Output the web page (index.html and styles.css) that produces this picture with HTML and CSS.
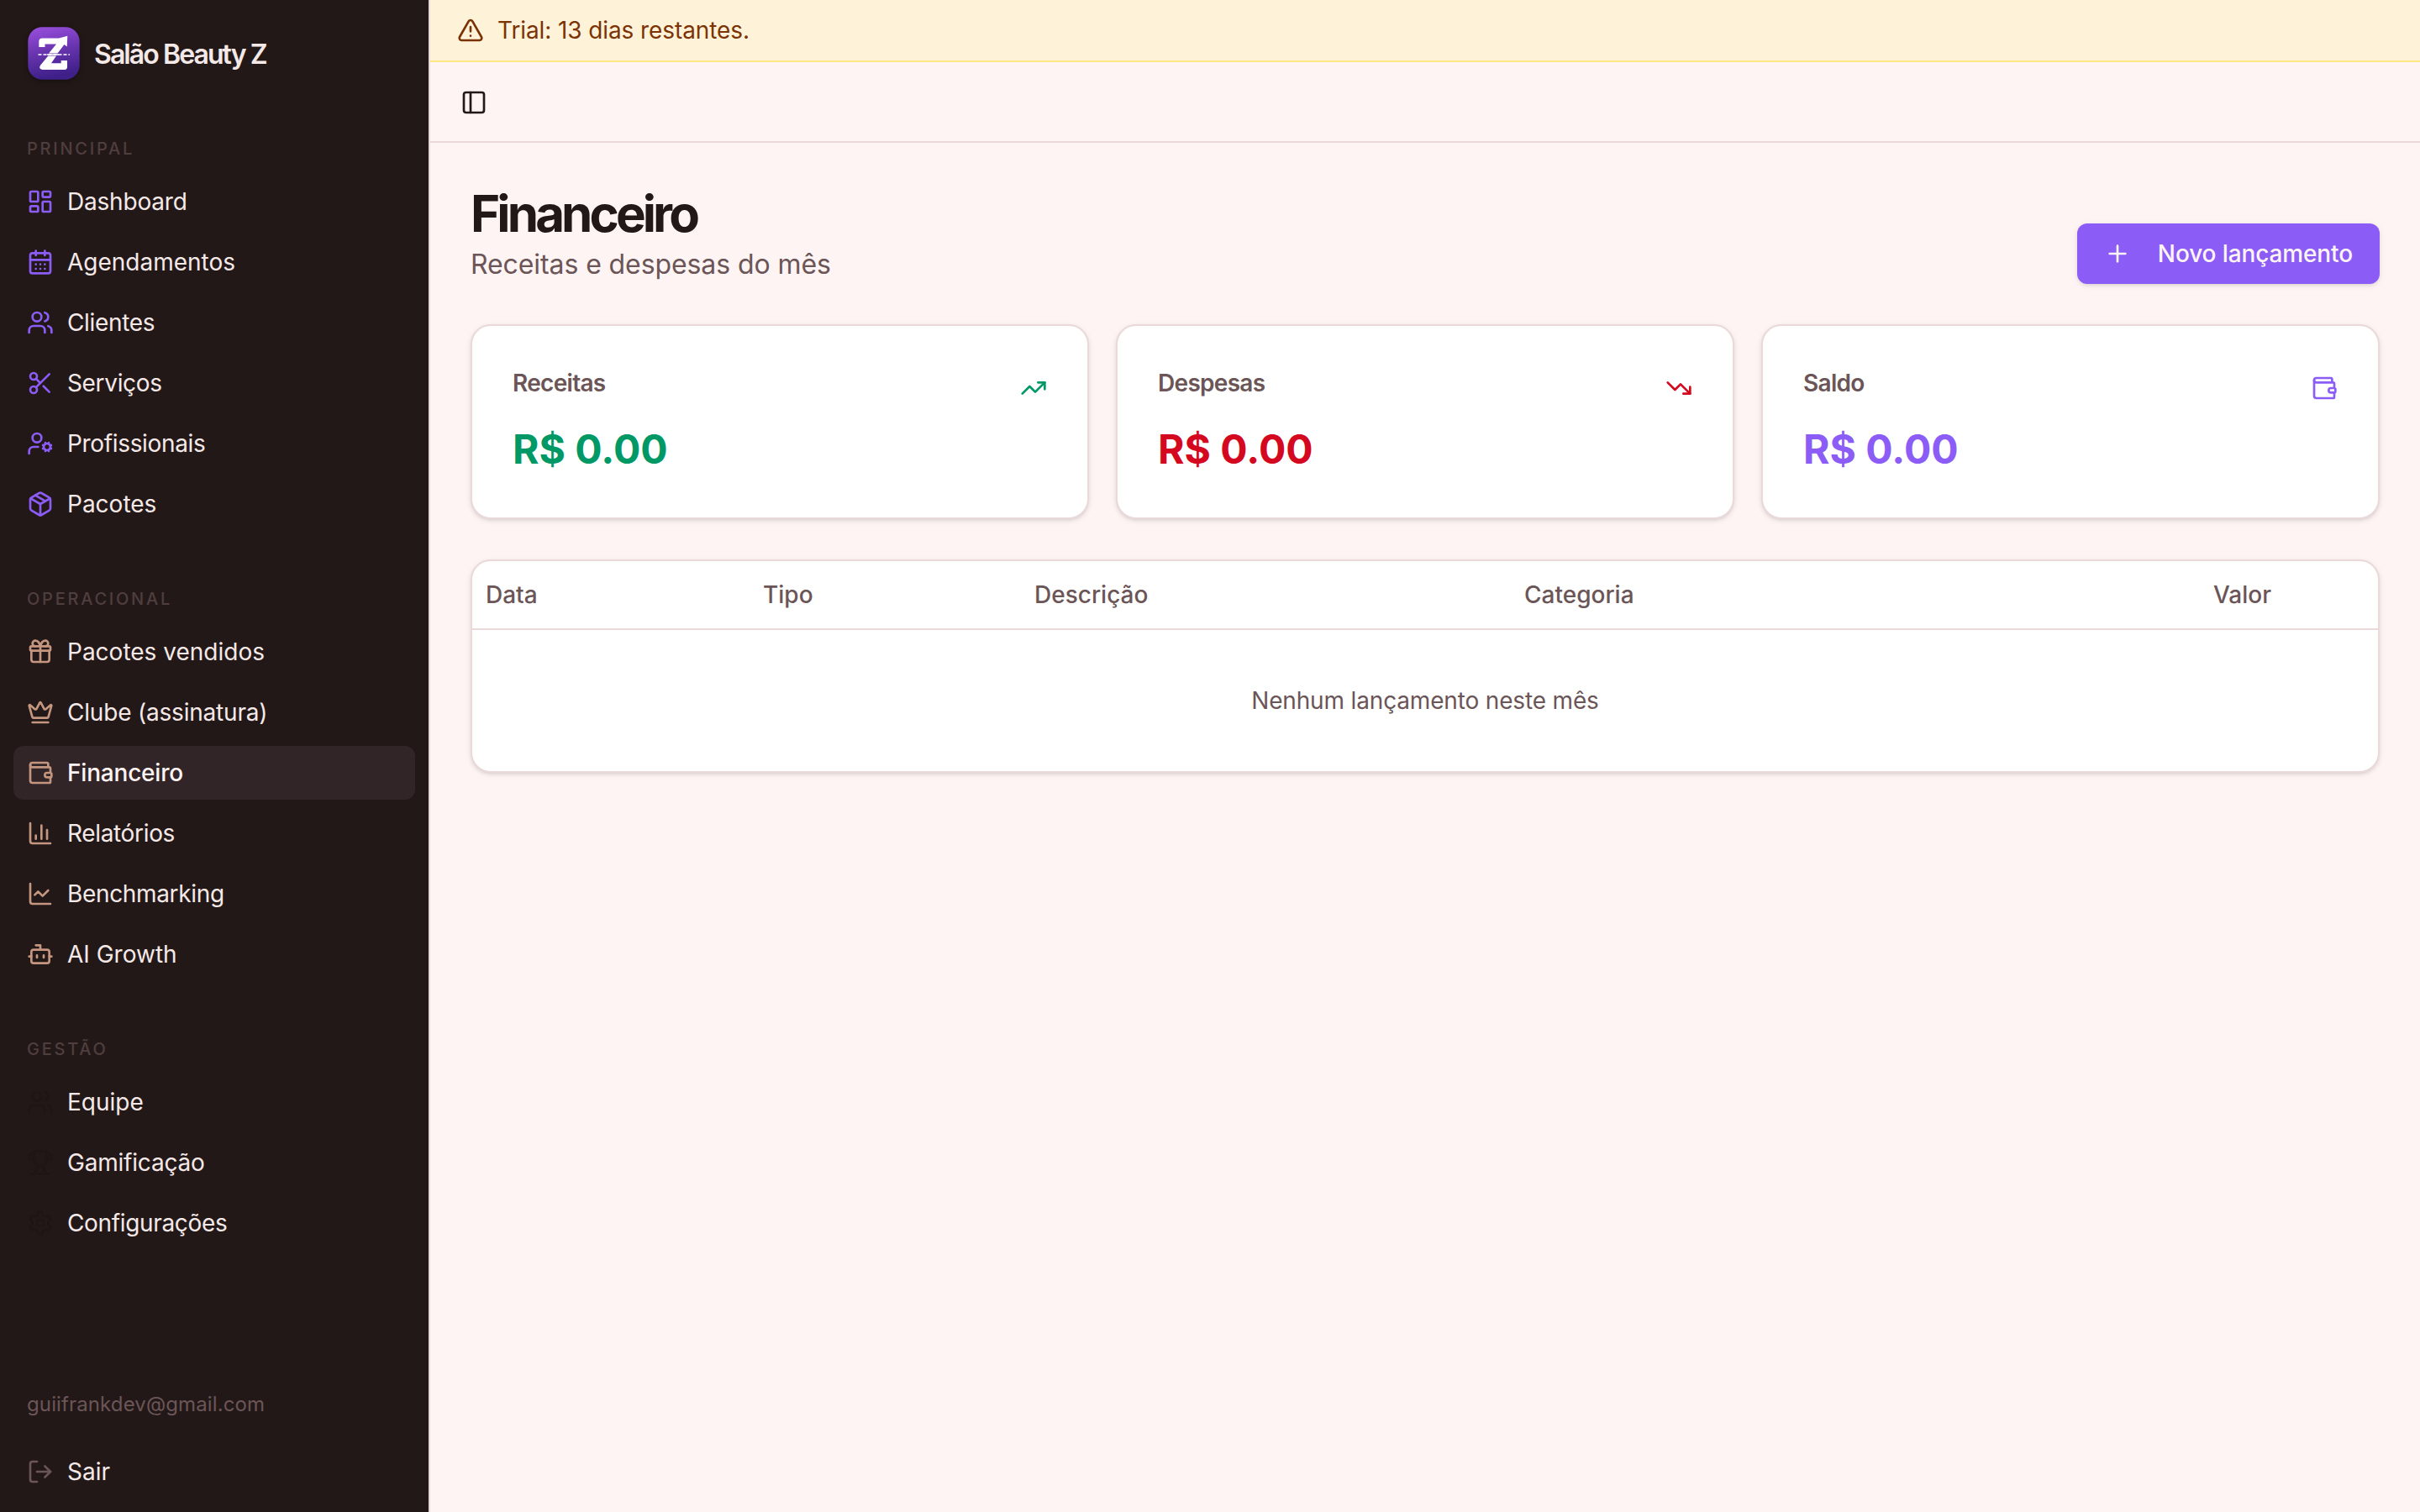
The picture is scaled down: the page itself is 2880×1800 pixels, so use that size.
FILE: index.html
```html
<!DOCTYPE html>
<html lang="pt-BR">
<head>
  <meta charset="UTF-8">
  <title>Financeiro - Salão Beauty Z</title>
  <link rel="stylesheet" href="styles.css">
</head>

<body>
  <!-- Icon sprite -->
  <svg class="sprite">
    <symbol id="dashboard" viewBox="0 0 24 24"><rect width="7" height="9" x="3" y="3" rx="1"/><rect width="7" height="5" x="14" y="3" rx="1"/><rect width="7" height="9" x="14" y="12" rx="1"/><rect width="7" height="5" x="3" y="16" rx="1"/></symbol>
    <symbol id="calendar" viewBox="0 0 24 24"><path d="M8 2v4M16 2v4"/><rect width="18" height="18" x="3" y="4" rx="2"/><path d="M3 10h18M8 14h.01M12 14h.01M16 14h.01M8 18h.01M12 18h.01M16 18h.01"/></symbol>
    <symbol id="users" viewBox="0 0 24 24"><path d="M16 21v-2a4 4 0 0 0-4-4H6a4 4 0 0 0-4 4v2"/><path d="M16 3.128a4 4 0 0 1 0 7.744"/><path d="M22 21v-2a4 4 0 0 0-3-3.87"/><circle cx="9" cy="7" r="4"/></symbol>
    <symbol id="scissors" viewBox="0 0 24 24"><circle cx="6" cy="6" r="3"/><path d="M8.12 8.12 12 12"/><path d="M20 4 8.12 15.88"/><circle cx="6" cy="18" r="3"/><path d="M14.8 14.8 20 20"/></symbol>
    <symbol id="user-cog" viewBox="0 0 24 24"><path d="M10 15H6a4 4 0 0 0-4 4v2"/><path d="m14.305 16.53.923-.382"/><path d="m15.228 13.852-.923-.383"/><path d="m16.852 12.228-.383-.923"/><path d="m16.852 17.772-.383.924"/><path d="m19.148 12.228.383-.923"/><path d="m19.53 18.696-.382-.924"/><path d="m20.772 13.852.924-.383"/><path d="m20.772 16.148.924.383"/><circle cx="18" cy="15" r="3"/><circle cx="9" cy="7" r="4"/></symbol>
    <symbol id="package" viewBox="0 0 24 24"><path d="M11 21.73a2 2 0 0 0 2 0l7-4A2 2 0 0 0 21 16V8a2 2 0 0 0-1-1.73l-7-4a2 2 0 0 0-2 0l-7 4A2 2 0 0 0 3 8v8a2 2 0 0 0 1 1.73z"/><path d="M12 22V12"/><path d="M3.29 7 12 12l8.71-5"/><path d="m7.5 4.27 9 5.15"/></symbol>
    <symbol id="gift" viewBox="0 0 24 24"><path d="M12 7v14"/><path d="M20 11v8a2 2 0 0 1-2 2H6a2 2 0 0 1-2-2v-8"/><path d="M7.5 7a1 1 0 0 1 0-5A4.8 8 0 0 1 12 7a4.8 8 0 0 1 4.5-5 1 1 0 0 1 0 5"/><rect x="3" y="7" width="18" height="4" rx="1"/></symbol>
    <symbol id="crown" viewBox="0 0 24 24"><path d="M11.562 3.266a.5.5 0 0 1 .876 0L15.39 8.87a1 1 0 0 0 1.516.294L21.183 5.5a.5.5 0 0 1 .798.519l-2.834 10.246a1 1 0 0 1-.956.734H5.81a1 1 0 0 1-.957-.734L2.02 6.02a.5.5 0 0 1 .798-.519l4.276 3.664a1 1 0 0 0 1.516-.294z"/><path d="M5 21h14"/></symbol>
    <symbol id="wallet" viewBox="0 0 24 24"><path d="M19 7V4a1 1 0 0 0-1-1H5a2 2 0 0 0 0 4h15a1 1 0 0 1 1 1v4h-3a2 2 0 0 0 0 4h3a1 1 0 0 0 1-1v-2a1 1 0 0 0-1-1"/><path d="M3 5v14a2 2 0 0 0 2 2h15a1 1 0 0 0 1-1v-4"/></symbol>
    <symbol id="chart-column" viewBox="0 0 24 24"><path d="M3 3v16a2 2 0 0 0 2 2h16"/><path d="M18 17V9M13 17V5M8 17v-3"/></symbol>
    <symbol id="chart-line" viewBox="0 0 24 24"><path d="M3 3v16a2 2 0 0 0 2 2h16"/><path d="m19 9-5 5-4-4-3 3"/></symbol>
    <symbol id="bot" viewBox="0 0 24 24"><path d="M12 8V4H8"/><rect width="16" height="12" x="4" y="8" rx="2"/><path d="M2 14h2M20 14h2M15 13v2M9 13v2"/></symbol>
    <symbol id="trophy" viewBox="0 0 24 24"><path d="M10 14.66v1.626a2 2 0 0 1-.976 1.696A5 5 0 0 0 7 21.978"/><path d="M14 14.66v1.626a2 2 0 0 0 .976 1.696A5 5 0 0 1 17 21.978"/><path d="M18 9h1.5a1 1 0 0 0 0-5H18"/><path d="M4 22h16"/><path d="M6 9a6 6 0 0 0 12 0V3a1 1 0 0 0-1-1H7a1 1 0 0 0-1 1z"/><path d="M6 9H4.5a1 1 0 0 1 0-5H6"/></symbol>
    <symbol id="settings" viewBox="0 0 24 24"><path d="M9.671 4.136a2.34 2.34 0 0 1 4.659 0 2.34 2.34 0 0 0 3.319 1.915 2.34 2.34 0 0 1 2.33 4.033 2.34 2.34 0 0 0 0 3.831 2.34 2.34 0 0 1-2.33 4.033 2.34 2.34 0 0 0-3.319 1.915 2.34 2.34 0 0 1-4.659 0 2.34 2.34 0 0 0-3.32-1.915 2.34 2.34 0 0 1-2.33-4.033 2.34 2.34 0 0 0 0-3.831A2.34 2.34 0 0 1 6.35 6.051a2.34 2.34 0 0 0 3.319-1.915"/><circle cx="12" cy="12" r="3"/></symbol>
    <symbol id="log-out" viewBox="0 0 24 24"><path d="m16 17 5-5-5-5"/><path d="M21 12H9"/><path d="M9 21H5a2 2 0 0 1-2-2V5a2 2 0 0 1 2-2h4"/></symbol>
    <symbol id="alert" viewBox="0 0 24 24"><path d="m21.73 18-8-14a2 2 0 0 0-3.48 0l-8 14A2 2 0 0 0 4 21h16a2 2 0 0 0 1.73-3"/><path d="M12 9v4M12 17h.01"/></symbol>
    <symbol id="panel" viewBox="0 0 24 24"><rect width="18" height="18" x="3" y="3" rx="2"/><path d="M9 3v18"/></symbol>
    <symbol id="plus" viewBox="0 0 24 24"><path d="M5 12h14M12 5v14"/></symbol>
    <symbol id="trending-up" viewBox="0 0 24 24"><path d="M16 7h6v6"/><path d="m22 7-8.5 8.5-5-5L2 17"/></symbol>
    <symbol id="trending-down" viewBox="0 0 24 24"><path d="M16 17h6v-6"/><path d="m22 17-8.5-8.5-5 5L2 7"/></symbol>
  </svg>

  <div class="app">
    <aside class="sidebar">
      <div class="brand">
        <svg class="logo" viewBox="0 0 64 64">
          <defs>
            <linearGradient id="logoBg" x1="0" y1="0" x2="0.2" y2="1">
              <stop offset="0" stop-color="#9b50e0"/>
              <stop offset="0.5" stop-color="#6a35b0"/>
              <stop offset="1" stop-color="#3f2089"/>
            </linearGradient>
          </defs>
          <rect x="1.3" y="0.3" width="61.4" height="62.4" rx="17" fill="url(#logoBg)"/>
          <!-- arrow half, scissor line, base half -->
          <g class="logo-mark">
            <path d="M14.3 24v-6.500q0-4 4-4H38L48.300 10.800 47.700 23.600 44.500 21 36.500 31.500H26L35 20.500H21.500V24z"/>
            <path class="cut" d="M13.500 33H51" stroke-dasharray="4 2"/>
            <path class="cut" d="M24 33h14"/>
            <path d="M25.300 34.500H35L29 43.200H40.700V40H48v7.500q0 3.500-3.500 3.500H18.500q-5-1-2.500-5.200z"/>
          </g>
        </svg>
        <span class="brand-name">Salão Beauty Z</span>
      </div>

      <nav class="menu">
        <div class="group violet">
          <div class="group-label">Principal</div>
          <a class="item snug"><svg class="icon"><use href="#dashboard"/></svg>Dashboard</a>
          <a class="item"><svg class="icon"><use href="#calendar"/></svg>Agendamentos</a>
          <a class="item tight"><svg class="icon"><use href="#users"/></svg>Clientes</a>
          <a class="item tight"><svg class="icon"><use href="#scissors"/></svg>Serviços</a>
          <a class="item tight"><svg class="icon"><use href="#user-cog"/></svg>Profissionais</a>
          <a class="item"><svg class="icon"><use href="#package"/></svg>Pacotes</a>
        </div>
        <div class="group rose">
          <div class="group-label">Operacional</div>
          <a class="item"><svg class="icon"><use href="#gift"/></svg>Pacotes vendidos</a>
          <a class="item snug"><svg class="icon"><use href="#crown"/></svg>Clube (assinatura)</a>
          <a class="item snug active"><svg class="icon"><use href="#wallet"/></svg>Financeiro</a>
          <a class="item tight"><svg class="icon"><use href="#chart-column"/></svg>Relatórios</a>
          <a class="item tight"><svg class="icon"><use href="#chart-line"/></svg>Benchmarking</a>
          <a class="item"><svg class="icon"><use href="#bot"/></svg>AI Growth</a>
        </div>
        <div class="group dark">
          <div class="group-label">Gestão</div>
          <a class="item"><svg class="icon"><use href="#users"/></svg>Equipe</a>
          <a class="item snug"><svg class="icon"><use href="#trophy"/></svg>Gamificação</a>
          <a class="item tight"><svg class="icon"><use href="#settings"/></svg>Configurações</a>
        </div>
      </nav>

      <div class="user">
        <div class="email">guiifrankdev@gmail.com</div>
        <a class="item"><svg class="icon"><use href="#log-out"/></svg>Sair</a>
      </div>
    </aside>

    <div class="page">
      <div class="trial"><svg class="icon"><use href="#alert"/></svg>Trial: 13 dias restantes.</div>
      <header class="topbar"><svg class="icon"><use href="#panel"/></svg></header>

      <main class="content">
        <div class="heading">
          <div>
            <h1>Financeiro</h1>
            <p class="subtitle">Receitas e despesas do mês</p>
          </div>
          <button class="new-entry"><svg class="icon"><use href="#plus"/></svg>Novo lançamento</button>
        </div>

        <div class="cards">
          <div class="card green">
            <div class="card-head"><span class="card-title">Receitas</span><svg class="icon"><use href="#trending-up"/></svg></div>
            <div class="amount">R$ 0.00</div>
          </div>
          <div class="card red">
            <div class="card-head"><span class="card-title">Despesas</span><svg class="icon"><use href="#trending-down"/></svg></div>
            <div class="amount">R$ 0.00</div>
          </div>
          <div class="card purple">
            <div class="card-head"><span class="card-title">Saldo</span><svg class="icon"><use href="#wallet"/></svg></div>
            <div class="amount">R$ 0.00</div>
          </div>
        </div>

        <div class="table-card">
          <table>
            <colgroup>
              <col class="col-date">
              <col class="col-type">
              <col class="col-desc">
              <col class="col-cat">
              <col>
              <col class="col-actions">
            </colgroup>
            <thead>
              <tr><th>Data</th><th>Tipo</th><th>Descrição</th><th>Categoria</th><th class="right">Valor</th><th></th></tr>
            </thead>
            <tbody>
              <tr><td class="empty" colspan="6">Nenhum lançamento neste mês</td></tr>
            </tbody>
          </table>
        </div>
      </main>
    </div>
  </div>
</body>
</html>
```
FILE: styles.css
```css
* {
  box-sizing: border-box;
}

body {
  margin: 0;
  font-family: Inter, "Liberation Sans", sans-serif;
  font-size: 28px;
  line-height: 40px;
  font-optical-sizing: none;
  color: #231818;
  background-color: #fdf4f3;
}

.sprite {
  display: none;
}

.icon {
  width: 32px;
  height: 32px;
  flex-shrink: 0;
  fill: none;
  stroke: currentColor;
  stroke-width: 2;
  stroke-linecap: round;
  stroke-linejoin: round;
}

.app {
  display: flex;
  height: 100vh;
}

/* Sidebar */
.sidebar {
  display: flex;
  flex-direction: column;
  width: 512px;
  flex-shrink: 0;
  background-color: #231818;
  border-right: 2px solid #ead9d9;
  color: #f5e9e8;
}

.brand {
  display: flex;
  align-items: center;
  gap: 16px;
  padding: 32px;
}

.logo {
  width: 64px;
  height: 64px;
  filter: drop-shadow(0 2px 3px rgba(0, 0, 0, 0.4));
}

.logo-mark {
  fill: #fff;
}

.logo-mark .cut {
  stroke: #fff;
  stroke-width: 1.500;
}

.brand-name {
  padding-top: 2px;
  font-size: 32px;
  font-weight: 600;
  letter-spacing: -0.06em;
}

.menu {
  display: flex;
  flex-direction: column;
  gap: 16px;
  flex: 1;
}

.group {
  display: flex;
  flex-direction: column;
  gap: 8px;
  padding: 16px;
}

.group-label {
  height: 64px;
  margin-bottom: -8px;
  padding: 0 16px;
  font-size: 20px;
  font-weight: 500;
  line-height: 66px;
  letter-spacing: 2.75px;
  text-transform: uppercase;
  color: #4f3e3e;
}

.item {
  display: flex;
  align-items: center;
  gap: 16px;
  height: 64px;
  padding: 0 16px;
  border-radius: 12px;
}

.item.snug {
  letter-spacing: -0.2px;
}

.item.tight {
  letter-spacing: -0.34px;
}

.item.active {
  background-color: #322528;
  color: #fdf4f3;
  font-weight: 500;
}

.violet .icon {
  color: #8b5cf6;
}

.rose .icon {
  color: #c4957f;
}

.dark .icon {
  color: #201514;
}

.user {
  display: flex;
  flex-direction: column;
  gap: 16px;
  padding: 16px;
}

.email {
  padding: 16px;
  font-size: 24px;
  line-height: 32px;
  letter-spacing: 0.12px;
  color: #6b5557;
}

.user .icon {
  color: #6b5557;
}

/* Page */
.page {
  flex: 1;
}

.trial {
  display: flex;
  align-items: center;
  gap: 16px;
  height: 74px;
  padding: 0 32px;
  background-color: #fef3d9;
  border-bottom: 2px solid #fee685;
  color: #7b3306;
  letter-spacing: -0.1px;
}

.topbar {
  display: flex;
  align-items: center;
  height: 96px;
  padding: 2px 36px 0;
  border-bottom: 2px solid #ead9d9;
}

.content {
  display: flex;
  flex-direction: column;
  gap: 48px;
  padding: 48px;
}

.heading {
  display: flex;
  justify-content: space-between;
  align-items: flex-end;
}

h1 {
  margin: 0;
  font-size: 60px;
  line-height: 72px;
  font-weight: 700;
  letter-spacing: -0.065em;
}

.subtitle {
  margin: 0;
  padding-top: 1px;
  font-size: 32px;
  line-height: 47px;
  letter-spacing: -0.09px;
  color: #6b5557;
}

.new-entry {
  display: flex;
  align-items: center;
  gap: 32px;
  height: 72px;
  padding: 0 32px;
  border: none;
  border-radius: 12px;
  background-color: #8b5cf6;
  box-shadow: 0 2px 6px rgba(0, 0, 0, 0.1), 0 2px 4px -2px rgba(0, 0, 0, 0.1);
  color: #fdf4f3;
  font: inherit;
  font-weight: 500;
  letter-spacing: -0.12px;
}

.cards {
  display: grid;
  grid-template-columns: repeat(3, 1fr);
  gap: 32px;
}

.card,
.table-card {
  background-color: #fff;
  border: 2px solid #ead9d9;
  border-radius: 24px;
  box-shadow: 0 2px 6px rgba(0, 0, 0, 0.1), 0 2px 4px -2px rgba(0, 0, 0, 0.1);
}

.card {
  height: 232px;
  padding: 48px;
}

.card-head {
  display: flex;
  justify-content: space-between;
  height: 67px;
}

.card-head .icon {
  margin-top: 10px;
}

.card-title {
  font-weight: 600;
  letter-spacing: -0.025em;
  color: #6b5557;
}

.amount {
  font-size: 48px;
  line-height: 64px;
  font-weight: 700;
}

.green .icon,
.green .amount {
  color: #009966;
}

.red .icon,
.red .amount {
  color: #d4081f;
}

.purple .icon,
.purple .amount {
  color: #8b5cf6;
}

.table-card {
  overflow: hidden;
}

table {
  width: 100%;
  table-layout: fixed;
  border-spacing: 0;
}

th {
  height: 82px;
  padding: 0 16px;
  border-bottom: 2px solid #ead9d9;
  font-weight: 500;
  text-align: left;
  color: #6b5557;
}

.right {
  text-align: right;
}

.empty {
  height: 168px;
  padding: 0;
  text-align: center;
  letter-spacing: -0.16px;
  color: #6b5557;
}

.col-date {
  width: 330px;
}

.col-type {
  width: 323px;
}

.col-desc {
  width: 583px;
}

.col-cat {
  width: 500px;
}

.col-actions {
  width: 111px;
}
```
